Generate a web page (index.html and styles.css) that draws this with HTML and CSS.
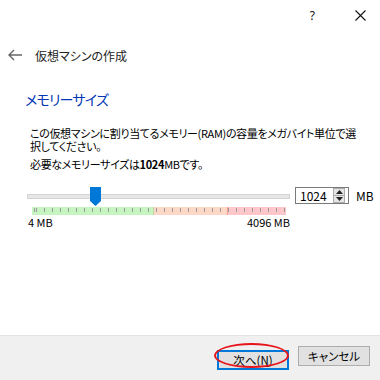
FILE: index.html
```html
<!DOCTYPE html>
<html lang="ja">

<head>
    <meta charset="UTF-8">
    <meta name="viewport" content="width=device-width, initial-scale=1.0">
    <title>仮想マシンの作成</title>
    <link rel="stylesheet" href="styles.css">
</head>

<body>
    <!-- Caption buttons -->
    <div class="titlebar">
        <span class="cap-help">?</span>
        <svg class="cap-close" width="11" height="11" viewBox="0 0 11 11">
            <path d="M0.5 0.5 L10.5 10.5 M10.5 0.5 L0.5 10.5" stroke="#111" stroke-width="1.1" fill="none"/>
        </svg>
    </div>

    <!-- Wizard header -->
    <div class="header">
        <svg class="back" width="14" height="12" viewBox="0 0 14 12">
            <path d="M6 1 L1 6 L6 11 M1 6 L14 6" stroke="#666" stroke-width="1.4" fill="none"/>
        </svg>
        <span class="header-title">仮想マシンの作成</span>
    </div>

    <div class="content">
        <h2 class="page-title">メモリーサイズ</h2>
        <p class="desc">この仮想マシンに割り当てるメモリー(RAM)の容量をメガバイト単位で選<br>択してください。</p>
        <p class="desc need">必要なメモリーサイズは<b>1024</b>MBです。</p>

        <!-- Memory slider + spin box -->
        <div class="memory-row">
            <div class="slider">
                <div class="track"></div>
                <svg class="thumb" width="11" height="19" viewBox="0 0 11 19">
                    <polygon points="0,0 11,0 11,14 5.5,19 0,14" fill="#0078d7"/>
                </svg>
                <div class="ticks">
                    <div class="zone zone-ok" style="width: 121px"></div>
                    <div class="zone zone-warn" style="width: 73px"></div>
                    <div class="zone zone-bad" style="width: 58px"></div>
                </div>
            </div>
            <div class="spin">
                <span class="spin-value">1024</span>
                <div class="spin-btns">
                    <div class="spin-btn"><svg width="7" height="4" viewBox="0 0 7 4"><polygon points="0,4 7,4 3.5,0" fill="#222"/></svg></div>
                    <div class="spin-btn"><svg width="7" height="4" viewBox="0 0 7 4"><polygon points="0,0 7,0 3.5,4" fill="#222"/></svg></div>
                </div>
            </div>
            <span class="unit">MB</span>
        </div>
        <div class="range-labels">
            <span>4 MB</span>
            <span>4096 MB</span>
        </div>
    </div>

    <!-- Footer buttons -->
    <div class="footer">
        <div class="btn-wrap">
            <button class="btn btn-default">次へ(<u>N</u>)</button>
            <div class="mark"></div>
        </div>
        <button class="btn">キャンセル</button>
    </div>
</body>

</html>
```

FILE: styles.css
```css
body {
    margin: 0;
    width: 380px;
    height: 380px;
    overflow: hidden;
    display: flex;
    flex-direction: column;
    background: #fff;
    font-family: "Noto Sans CJK JP", "Noto Sans", sans-serif;
    font-feature-settings: "palt";
    color: #000;
}

.titlebar {
    height: 30px;
    display: flex;
    justify-content: flex-end;
    align-items: center;
    gap: 40px;
    padding-right: 14px;
}

.cap-help {
    font-family: "Noto Sans", sans-serif;
    font-size: 12px;
    color: #111;
}

.header {
    height: 20px;
    margin-top: 15px;
    display: flex;
    align-items: center;
    padding-left: 8px;
}

.header-title {
    margin-left: 13px;
    font-size: 12px;
    color: #222;
}

.content {
    padding-left: 25px;
}

.page-title {
    margin: 26px 0 0 0;
    font-size: 14px;
    line-height: 16px;
    letter-spacing: -0.8px;
    font-weight: normal;
    color: #0037b5;
}

.desc {
    margin: 20px 0 0 5px;
    font-size: 11px;
    line-height: 13px;
    letter-spacing: -0.35px;
    white-space: nowrap;
}

.need {
    margin-top: 5px;
}

.memory-row {
    margin-top: 16px;
    display: flex;
    align-items: flex-start;
}

.slider {
    position: relative;
    width: 263px;
    height: 29px;
    margin-left: 2px;
}

.track {
    margin-top: 7px;
    height: 3px;
    background: #e7e7e7;
    border: 1px solid #d4d4d4;
}

.thumb {
    position: absolute;
    left: 63px;
    top: 0;
}

.ticks {
    display: flex;
    margin: 8px 0 0 5px;
    height: 8px;
    position: relative;
}

.ticks::after {
    content: "";
    position: absolute;
    left: 0;
    right: 0;
    top: 1px;
    height: 4px;
    background: repeating-linear-gradient(to right, #9a9a9a 0, #9a9a9a 1px, transparent 1px, transparent 8px);
    background-position: 4px 0;
}

.zone-ok {
    background: #c6f5c2;
}

.zone-warn {
    background: #fed8c6;
    border-left: 1px solid #b9d5a0;
}

.zone-bad {
    background: #ffc7c9;
    border-left: 1px solid #f59a8c;
}

.spin {
    margin-left: 5px;
    width: 45px;
    height: 15px;
    border: 1px solid #7a7a7a;
    display: flex;
    align-items: center;
    justify-content: space-between;
    padding: 0 3px 0 4px;
    box-sizing: content-box;
}

.spin-value {
    font-size: 12px;
    line-height: 15px;
}

.spin-btns {
    display: flex;
    flex-direction: column;
    border: 1px solid #adadad;
    background: #e5e5e5;
}

.spin-btn {
    width: 10px;
    height: 6px;
    display: flex;
    align-items: center;
    justify-content: center;
}

.spin-btn + .spin-btn {
    border-top: 1px solid #adadad;
}

.unit {
    margin-left: 7px;
    font-size: 12px;
    line-height: 17px;
}

.range-labels {
    width: 262px;
    margin-left: 3px;
    margin-top: 0;
    display: flex;
    justify-content: space-between;
    font-size: 11px;
    line-height: 13px;
}

.footer {
    margin-top: auto;
    height: 45px;
    box-sizing: border-box;
    background: #f0f0f0;
    border-top: 1px solid #e3e3e3;
    display: flex;
    justify-content: flex-end;
    align-items: flex-start;
    gap: 9px;
    padding: 10px 10px 0 0;
}

.btn-wrap {
    position: relative;
}

.btn {
    width: 72px;
    height: 20px;
    padding: 0;
    border: 1px solid #adadad;
    background: #e1e1e1;
    font-family: "Noto Sans CJK JP", sans-serif;
    font-feature-settings: "palt";
    font-size: 11.5px;
    line-height: 16px;
    color: #000;
}

.btn-default {
    border: 2px solid #0078d7;
}

.mark {
    position: absolute;
    left: -3px;
    top: -3px;
    width: 75px;
    height: 25px;
    box-sizing: border-box;
    border: 2px solid #e8141b;
    border-radius: 50%;
}
```
